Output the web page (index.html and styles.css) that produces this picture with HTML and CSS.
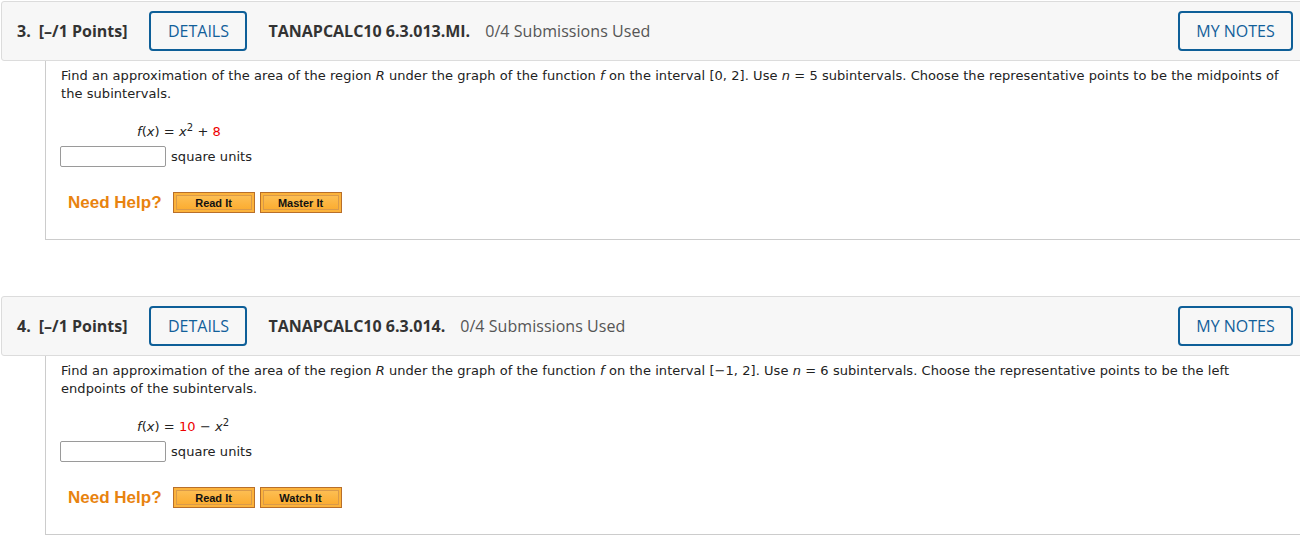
FILE: index.html
```
<!DOCTYPE html>
<html>
<head>
<meta charset="utf-8">
<link rel="stylesheet" href="styles.css">
</head>
<body>
<div class="question q3">
  <div class="qhead">
    <span class="qnum">3.</span>
    <span class="qpts">[–/1 Points]</span>
    <span class="btn-outline details">DETAILS</span>
    <span class="qid">TANAPCALC10 6.3.013.MI.</span>
    <span class="qsub">0/4 Submissions Used</span>
    <span class="spacer"></span>
    <span class="btn-outline notes">MY NOTES</span>
  </div>
  <div class="qbody">
    <p class="prompt">Find an approximation of the area of the region <i>R</i> under the graph of the function <i>f</i> on the interval [0, 2]. Use <i>n</i> = 5 subintervals. Choose the representative points to be the midpoints of the subintervals.</p>
    <p class="formula"><i>f</i>(<i>x</i>) = <i>x</i><sup>2</sup> + <span class="red">8</span></p>
    <div class="answer"><span class="inbox"></span><span class="units">square units</span></div>
    <div class="help"><span class="needhelp">Need Help?</span><span class="hbtn">Read It</span><span class="hbtn">Master It</span></div>
  </div>
</div>
<div class="question q4">
  <div class="qhead">
    <span class="qnum">4.</span>
    <span class="qpts">[–/1 Points]</span>
    <span class="btn-outline details">DETAILS</span>
    <span class="qid">TANAPCALC10 6.3.014.</span>
    <span class="qsub">0/4 Submissions Used</span>
    <span class="spacer"></span>
    <span class="btn-outline notes">MY NOTES</span>
  </div>
  <div class="qbody">
    <p class="prompt">Find an approximation of the area of the region <i>R</i> under the graph of the function <i>f</i> on the interval [−1, 2]. Use <i>n</i> = 6 subintervals. Choose the representative points to be the left endpoints of the subintervals.</p>
    <p class="formula"><i>f</i>(<i>x</i>) = <span class="red">10</span> − <i>x</i><sup>2</sup></p>
    <div class="answer"><span class="inbox"></span><span class="units">square units</span></div>
    <div class="help"><span class="needhelp">Need Help?</span><span class="hbtn">Read It</span><span class="hbtn">Watch It</span></div>
  </div>
</div>
</body>
</html>
```
FILE: styles.css
```
html, body { margin: 0; padding: 0; background: #fff; }
body { padding: 1px 0 0 1px; width: 1320px; }
.q4 { margin-top: 56px; }
.qhead {
  display: flex; align-items: center;
  height: 58px;
  background: #f7f7f7;
  border: 1px solid #dcdcdc;
  border-radius: 3px 0 0 3px;
  padding-left: 15px;
  font-family: "Open Sans", sans-serif;
  font-size: 16px;
  color: #333;
}
.qnum { font-weight: 700; margin-right: 8px; }
.qpts { font-weight: 700; margin-right: 22px; }
.btn-outline {
  box-sizing: border-box;
  height: 40px;
  display: inline-flex; align-items: center; justify-content: center;
  border: 2px solid #0e5f98;
  border-radius: 4px;
  color: #12609a;
  font-weight: 400;
}
.details { width: 98px; margin-right: 21px; }
.qid { font-weight: 700; margin-right: 15px; }
.qsub { color: #555; letter-spacing: 0.05px; }
.spacer { flex: 1; }
.notes { width: 115px; margin-right: 27px; }
.qbody {
  margin-left: 44px;
  border-left: 1px solid #cccccc;
  border-bottom: 1px solid #cccccc;
  padding: 6px 0 26px 15px;
  font-family: "DejaVu Sans", Verdana, sans-serif;
  font-size: 13px;
  letter-spacing: 0.06px;
  color: #222;
  width: 1240px;
}
.prompt { margin: 0; line-height: 18px; width: 1228px; }
.formula { margin: 20px 0 0 76px; line-height: 18px; }
.formula sup { font-size: 10px; line-height: 0; }
.red { color: #ee0000; }
.answer { display: flex; align-items: center; margin-top: 5px; }
.inbox {
  box-sizing: border-box;
  width: 106px; height: 21px;
  border: 1px solid #9a9a9a;
  border-radius: 2px;
  background: #fff;
  margin-left: -1px;
  margin-right: 5px;
}
.help { display: flex; align-items: center; margin-top: 25px; padding-left: 7px; }
.needhelp {
  font-family: "Liberation Sans", Arial, sans-serif;
  font-weight: 700; font-size: 17px;
  letter-spacing: 0;
  color: #e8830f;
  margin-right: 11px;
}
.hbtn {
  box-sizing: border-box;
  width: 82px; height: 21px;
  display: inline-flex; align-items: center; justify-content: center;
  border: 1px solid #b86f2a;
  box-shadow: inset 0 0 0 2px #fcb33b, inset 0 0 0 3px #d99a4a;
  background: linear-gradient(#fdc25a, #fba92a);
  font-family: "Liberation Sans", Arial, sans-serif;
  font-weight: 700; font-size: 11px;
  letter-spacing: 0;
  color: #111;
  margin-right: 5px;
}
```
